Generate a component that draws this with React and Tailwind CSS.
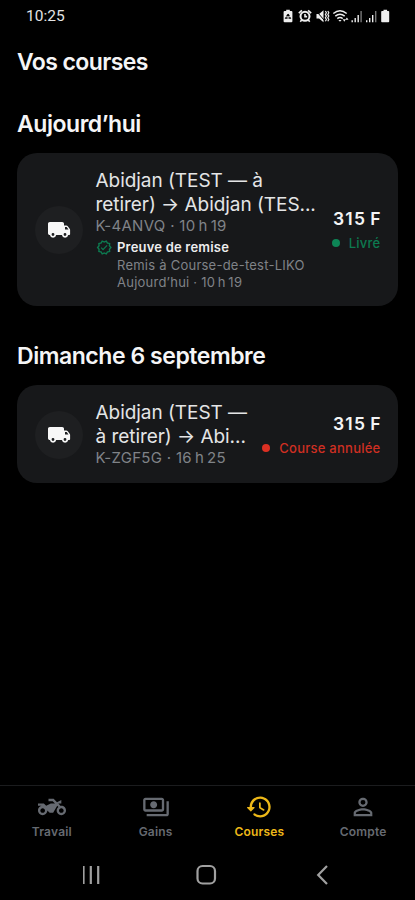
import { MdTwoWheeler, MdOutlinePayments, MdPersonOutline } from "react-icons/md";

const sections = [
  {
    title: "Aujourd’hui",
    className: "mt-[34px]",
    ride: {
      lines: ["Abidjan (TEST — à", "retirer) → Abidjan (TES..."],
      code: "K-4ANVQ · 10\u202fh\u202f19",
      price: "315\u202fF",
      status: "Livré",
      statusColor: "text-[#0d7a50]",
      dotColor: "bg-[#0d8556]",
      proof: {
        title: "Preuve de remise",
        to: "Remis à Course-de-test-LIKO",
        at: "Aujourd’hui · 10\u202fh\u202f19",
      },
    },
  },
  {
    title: "Dimanche 6 septembre",
    className: "mt-[36px]",
    ride: {
      lines: ["Abidjan (TEST —", "à retirer) → Abi..."],
      code: "K-ZGF5G · 16\u202fh\u202f25",
      price: "315\u202fF",
      status: "Course annulée",
      statusColor: "text-[#cf2f22]",
      dotColor: "bg-[#dc3023]",
    },
  },
];

function StatusIcons() {
  return (
    <svg width="112" height="14" viewBox="0 0 112 14" fill="#eee">
      {/* battery saver */}
      <path d="M3.200 .8h3.600v1.200H8.400a1 1 0 0 1 1 1v9.200a1 1 0 0 1-1 1H1.600a1 1 0 0 1-1-1V3a1 1 0 0 1 1-1h1.600z" />
      <path d="M5 5.200 7.200 9H2.800z" fill="none" stroke="#000" strokeWidth="1.300" strokeDasharray="2.600 .9" />
      {/* alarm */}
      <circle cx="22" cy="7.300" r="4.500" fill="none" stroke="#eee" strokeWidth="2" />
      <path d="M15.800 4.100 18.900 1.300M28.200 4.100 25.100 1.300M18.800 10.800l-1.500 1.900M25.200 10.800l1.500 1.900M22 4.900v2.700h2.100" fill="none" stroke="#eee" strokeWidth="1.600" />
      {/* muted with vibration */}
      <path d="M33.500 5h2.600L40.500 1.200v12L36.100 9.500H33.500z" />
      <path d="M33 1.700 41 11" stroke="#000" strokeWidth="1" />
      <path d="M42.400 2l1 1.700-1 1.700 1 1.700-1 1.700 1 1.700-1 1.700M44.800 2l1 1.700-1 1.700 1 1.700-1 1.700 1 1.700-1 1.700" fill="none" stroke="#eee" strokeWidth="1.200" />
      {/* wifi */}
      <g fill="none" stroke="#eee" strokeWidth="1.500">
        <path d="M50.300 4.500q6.700-5.400 13.400 0" />
        <path d="M52.300 7.100q4.700-3.800 9.400 0" />
        <path d="M54.300 9.600q2.700-2.200 5.400 0" />
      </g>
      <path d="M55.400 11h3.200L57 12.700zM59.800 10.300h3l-1.500 2.500zM62.300 10.800l1.600-2.300 1.600 2.300z" />
      {/* signal bars */}
      <path d="M68.500 11.200h1.400v2h-1.400zM71.500 9h1.400v4.200h-1.400zM74.500 6h1.400v7.200h-1.400zM83 11.200h1.400v2H83zM86 9h1.400v4.200H86zM89 6h1.400v7.200H89z" />
      <path d="M77.400 2h1.400v11.200h-1.400zM92 2h1.400v11.200H92z" fill="#777" />
      {/* battery */}
      <path d="M100.500 .8h3.600v1.200h1.300a.8.8 0 0 1 .8.8v9.600a.8.8 0 0 1-.8.8H99a.8.8 0 0 1-.8-.8V2.800a.8.8 0 0 1 .8-.8h1.500z" />
    </svg>
  );
}

function TruckIcon() {
  return (
    <svg width="24" height="24" viewBox="0 0 24 24" fill="#f8f8f8">
      <path
        fillRule="evenodd"
        d="M2.800 4h12.400c1 0 1.800.8 1.800 1.800V7.500h2.300c.6 0 1.100.3 1.500.7l2 2.800c.2.300.3.700.3 1.100V16c0 .6-.5 1-1 1H21.200a3.200 3.200 0 0 1-6.300 0H9.200a3.200 3.200 0 0 1-6.300 0C1.800 17 1 16.200 1 15.200V5.800C1 4.800 1.800 4 2.800 4zM18 9v2.600h3.500L19.700 9zM6 15.100a1.400 1.400 0 1 0 0 2.800 1.400 1.400 0 0 0 0-2.800zM18 15.100a1.400 1.400 0 1 0 0 2.800 1.400 1.400 0 0 0 0-2.800z"
      />
    </svg>
  );
}

function VerifiedIcon() {
  return (
    <svg width="16.500" height="17" viewBox="0 0 24 24" fill="#0d7a50" className="shrink-0">
      <path d="M23 11.990l-2.440-2.790.34-3.690-3.610-.820L15.400 1.500 12 2.960 8.600 1.500 6.710 4.690 3.100 5.500l.34 3.700L1 11.990l2.440 2.790-.34 3.700 3.610.820 1.890 3.200 3.400-1.470 3.400 1.460 1.890-3.190 3.610-.820-.34-3.690L23 11.990zm-3.950 1.480-.56.650.08.850.18 1.950-1.900.430-.840.190-.440.740-.990 1.680-1.780-.770-.8-.340-.790.340-1.780.770-.990-1.670-.440-.740-.840-.190-1.900-.430.180-1.960.08-.850-.56-.650L3.670 12l1.290-1.480.56-.650-.09-.860-.18-1.940 1.900-.430.840-.190.440-.740.990-1.680 1.780.770.8.340.790-.340 1.780-.770.990 1.680.440.740.840.190 1.900.430-.18 1.950-.08.850.56.650 1.290 1.470-1.280 1.480z" />
      <path d="M10.200 13.800l-2.100-2.100-1.200 1.200 3.300 3.300 6.600-6.600-1.200-1.200z" />
    </svg>
  );
}

function HistoryIcon() {
  return (
    <svg width="28" height="28" viewBox="0 0 24 24" fill="currentColor">
      <path d="M13.260 3C8.170 2.860 4 6.950 4 12H2.210c-.450 0-.670.540-.350.850l2.790 2.800c.2.200.510.200.710 0l2.790-2.800c.310-.310.090-.850-.360-.850H6c0-3.900 3.180-7.050 7.100-7 3.720.050 6.850 3.180 6.900 6.900.050 3.910-3.100 7.100-7 7.100-1.610 0-3.100-.550-4.280-1.480a.994.994 0 0 0-1.320.080c-.420.420-.390 1.130.080 1.490A8.858 8.858 0 0 0 13 21c5.050 0 9.140-4.170 9-9.260-.130-4.690-4.050-8.610-8.740-8.740zm-.510 5c-.410 0-.750.340-.750.750v3.680c0 .350.190.680.490.860l3.120 1.850c.360.210.820.090 1.030-.260.210-.360.090-.820-.260-1.030l-2.880-1.710v-3.400c0-.400-.340-.740-.750-.740z" />
    </svg>
  );
}

function RideCard({ ride }) {
  return (
    <div className="flex items-center rounded-[20px] bg-[#17181a] pt-[16px] pr-[17px] pb-[14.500px] pl-[17.500px]">
      <div className="flex size-12 shrink-0 items-center justify-center rounded-full bg-[#1e1f21]">
        <TruckIcon />
      </div>

      <div className="ml-[13px] min-w-0 flex-1 whitespace-nowrap">
        {ride.lines.map((line) => (
          <p key={line} className="text-[19px] leading-[23.500px] tracking-[-0.050px] text-[#e4e5e6]">
            {line}
          </p>
        ))}
        <p className="text-[15px] leading-5 tracking-[0.300px] text-[#808388]">{ride.code}</p>
        {ride.proof && (
          <div className="mt-[3px] flex gap-[5px]">
            <VerifiedIcon />
            <div className="text-[13px] leading-[17.500px] tracking-[0.240px] text-[#808388]">
              <p className="font-semibold tracking-[0.200px] text-[#ededee]">{ride.proof.title}</p>
              <p>{ride.proof.to}</p>
              <p>{ride.proof.at}</p>
            </div>
          </div>
        )}
      </div>

      <div className="mt-[2px] flex shrink-0 flex-col items-end">
        <p className="-mr-[1.200px] text-[17.500px] leading-6 font-semibold tracking-[1.200px] text-[#f4f4f5]">
          {ride.price}
        </p>
        <div className="flex items-center">
          <span className={`mr-[9px] size-2 rounded-full ${ride.dotColor}`} />
          <span className={`text-[13px] leading-6 font-medium tracking-[0.250px] ${ride.statusColor}`}>
            {ride.status}
          </span>
        </div>
      </div>
    </div>
  );
}

const tabs = [
  { label: "Travail", icon: <MdTwoWheeler size={28} /> },
  { label: "Gains", icon: <MdOutlinePayments size={28} /> },
  { label: "Courses", icon: <HistoryIcon />, active: true },
  { label: "Compte", icon: <MdPersonOutline size={28} /> },
];

export default function App() {
  return (
    <div className="flex h-[900px] w-[415px] flex-col overflow-hidden bg-black font-['Inter',sans-serif]">
      <div className="flex h-[33px] shrink-0 items-center justify-between pr-[20px] pl-[26px]">
        <span className="font-['Roboto',sans-serif] text-[15.500px] text-[#e4e4e4]">10:25</span>
        <div className="pb-[2px]">
          <StatusIcons />
        </div>
      </div>

      <main className="flex-1 pt-[15px] pr-[17.500px] pl-[17px] text-[#f5f5f6]">
        <h1 className="text-[23px] leading-7 font-semibold tracking-[-0.600px]">Vos courses</h1>
        {sections.map((s) => (
          <section key={s.title} className={s.className}>
            <h2 className="mb-[15px] text-[23px] leading-7 font-semibold tracking-[-0.450px]">{s.title}</h2>
            <RideCard ride={s.ride} />
          </section>
        ))}
      </main>

      <nav className="grid h-[64px] shrink-0 grid-cols-4 border-t border-[#1b1c1e] pt-[7px]">
        {tabs.map((t) => (
          <div
            key={t.label}
            className={`flex flex-col items-center ${t.active ? "text-[#edb818]" : "text-[#666a71]"}`}
          >
            {t.icon}
            <span className="mt-[3px] text-[12px] leading-4 font-semibold tracking-[0.200px]">{t.label}</span>
          </div>
        ))}
      </nav>

      <div className="flex h-[51px] shrink-0 items-center justify-center">
        <svg width="250" height="22" viewBox="0 0 250 22" fill="none" stroke="#a0a0a0" strokeWidth="2.200">
          <path d="M.5 2v18M7.800 2v18M15.200 2v18" />
          <rect x="114.500" y="2" width="17.500" height="17.500" rx="5" />
          <path d="M244 2l-8.800 9 8.800 9" />
        </svg>
      </div>
    </div>
  );
}
